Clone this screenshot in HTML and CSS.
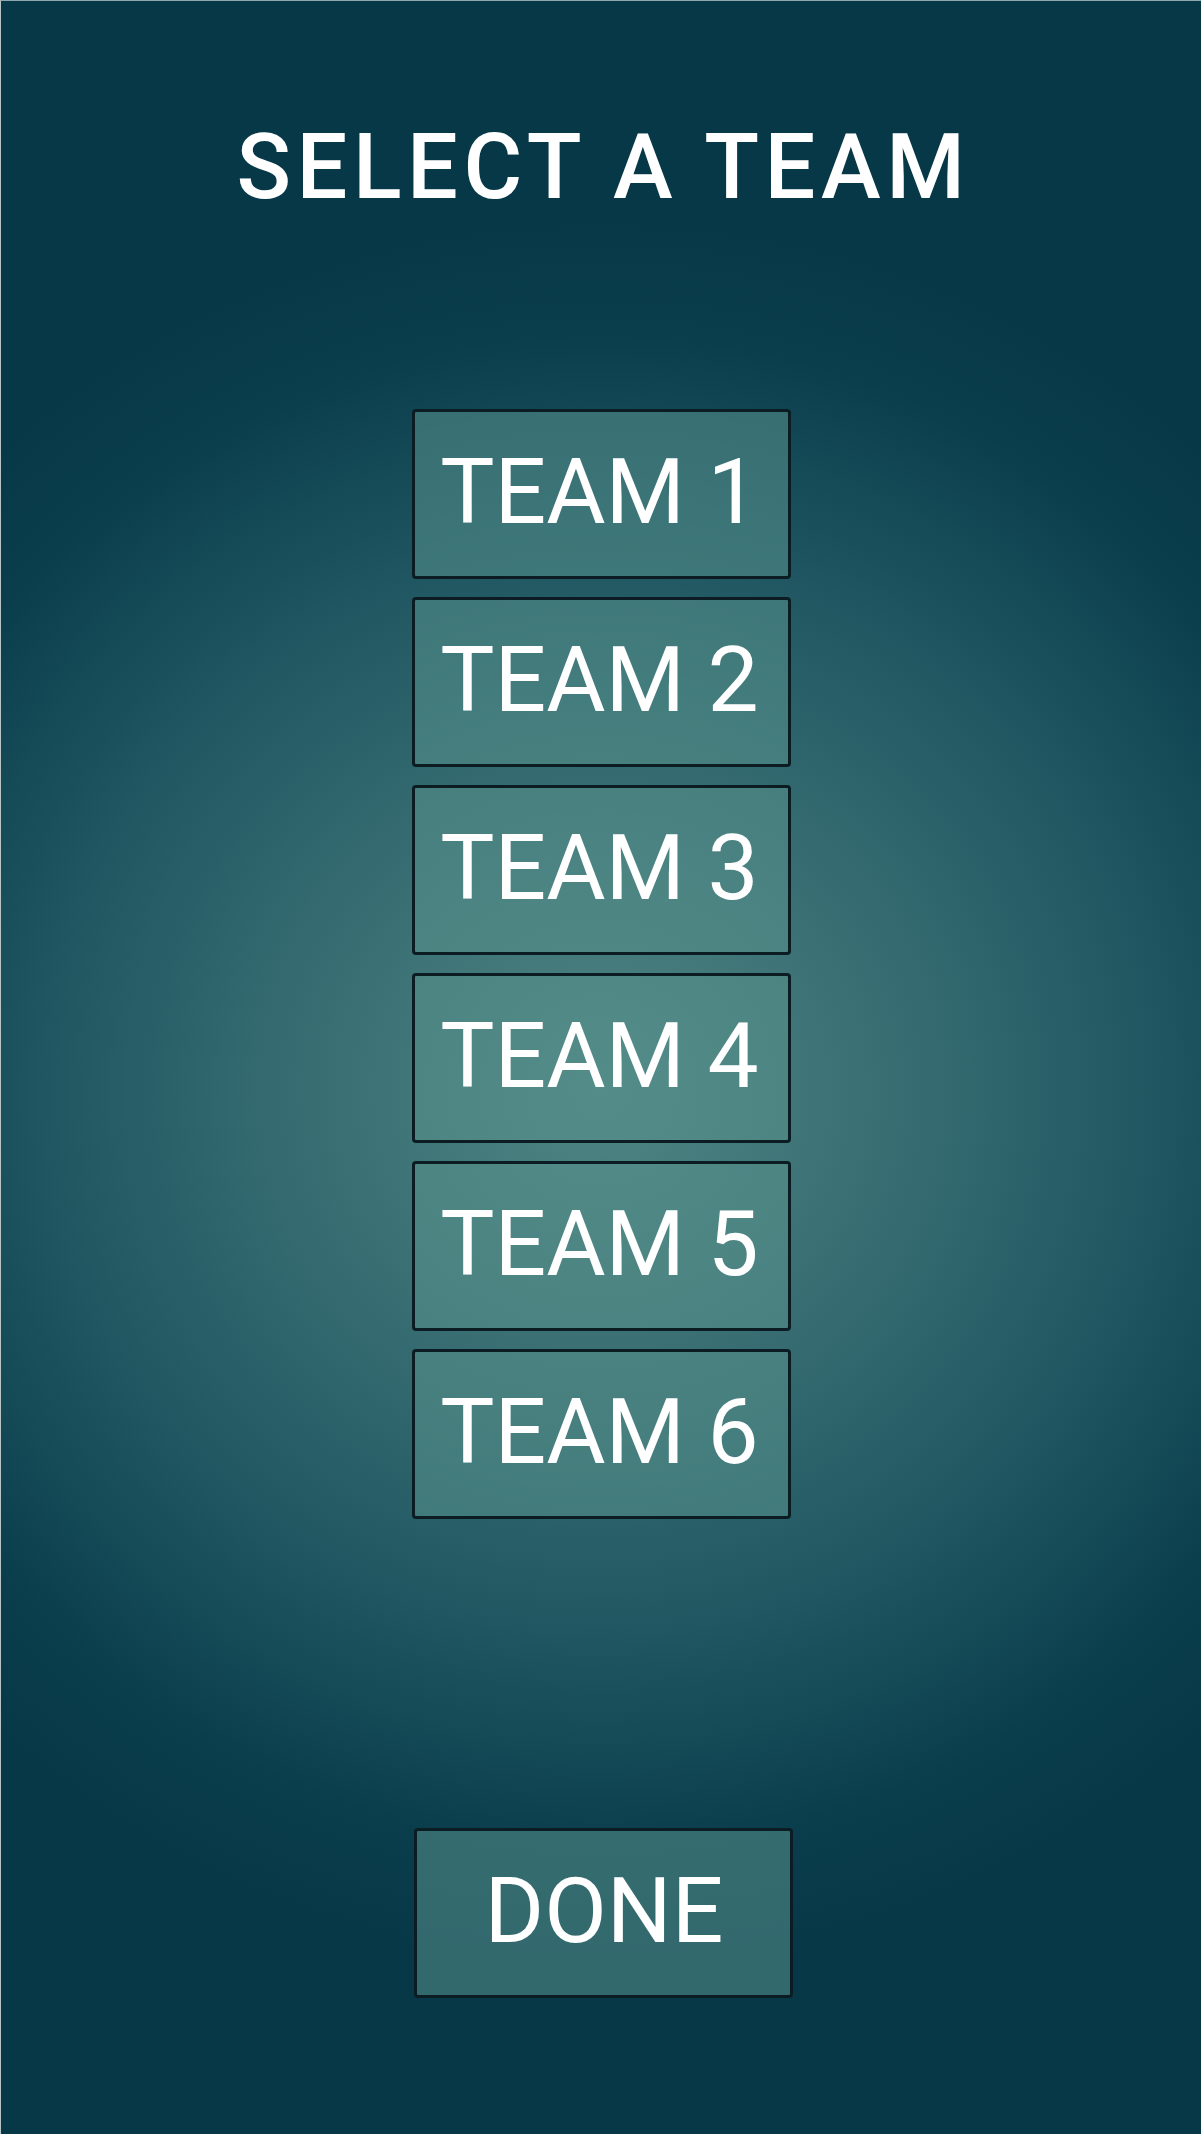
FILE: index.html
```html
<!DOCTYPE html>
<html lang="en">
<head>
<meta charset="utf-8">
<title>Select a Team</title>
<link rel="stylesheet" href="styles.css">
</head>
<body>
<div class="screen">
  <h1 class="title">SELECT A TEAM</h1>
  <div class="team-list">
    <button class="team-btn">TEAM 1</button>
    <button class="team-btn">TEAM 2</button>
    <button class="team-btn">TEAM 3</button>
    <button class="team-btn">TEAM 4</button>
    <button class="team-btn">TEAM 5</button>
    <button class="team-btn">TEAM 6</button>
  </div>
  <div class="done-row">
    <button class="team-btn done-btn">DONE</button>
  </div>
</div>
</body>
</html>
```

FILE: styles.css
```css
* {
  box-sizing: border-box;
}

html, body {
  margin: 0;
  padding: 0;
  background: #063848;
}

.screen {
  width: 1201px;
  height: 2134px;
  border-top: 1px solid #8ea6ad;
  border-left: 1px solid #b8c4c6;
  background: radial-gradient(ellipse 900px 880px at 50% 1090px, #4f8583 0%, #3a7074 30%, #1f5661 62%, #0b3e4d 86%, #063848 100%);
  display: flex;
  flex-direction: column;
  align-items: center;
  font-family: Roboto, "Noto Sans", sans-serif;
  color: #ffffff;
}

.title {
  margin: 122px 0 0 0;
  font-size: 90px;
  font-weight: 500;
  line-height: 1;
  letter-spacing: 5.6px;
  padding-left: 5px;
}

.team-list {
  margin-top: 196px;
  display: flex;
  flex-direction: column;
  gap: 18px;
}

.team-btn {
  width: 379px;
  height: 170px;
  border: 3px solid #0b1d22;
  border-radius: 4px;
  background: rgba(87, 145, 141, 0.55);
  color: #ffffff;
  font-family: Roboto, "Noto Sans", sans-serif;
  font-size: 91px;
  font-weight: 400;
  line-height: 1;
  display: flex;
  align-items: center;
  justify-content: center;
  padding: 0 3px 4px 0;
  margin: 0;
}

.done-btn {
  padding: 0 0 4px 2px;
}

.done-row {
  margin-top: 309px;
  padding-left: 4px;
}
```
